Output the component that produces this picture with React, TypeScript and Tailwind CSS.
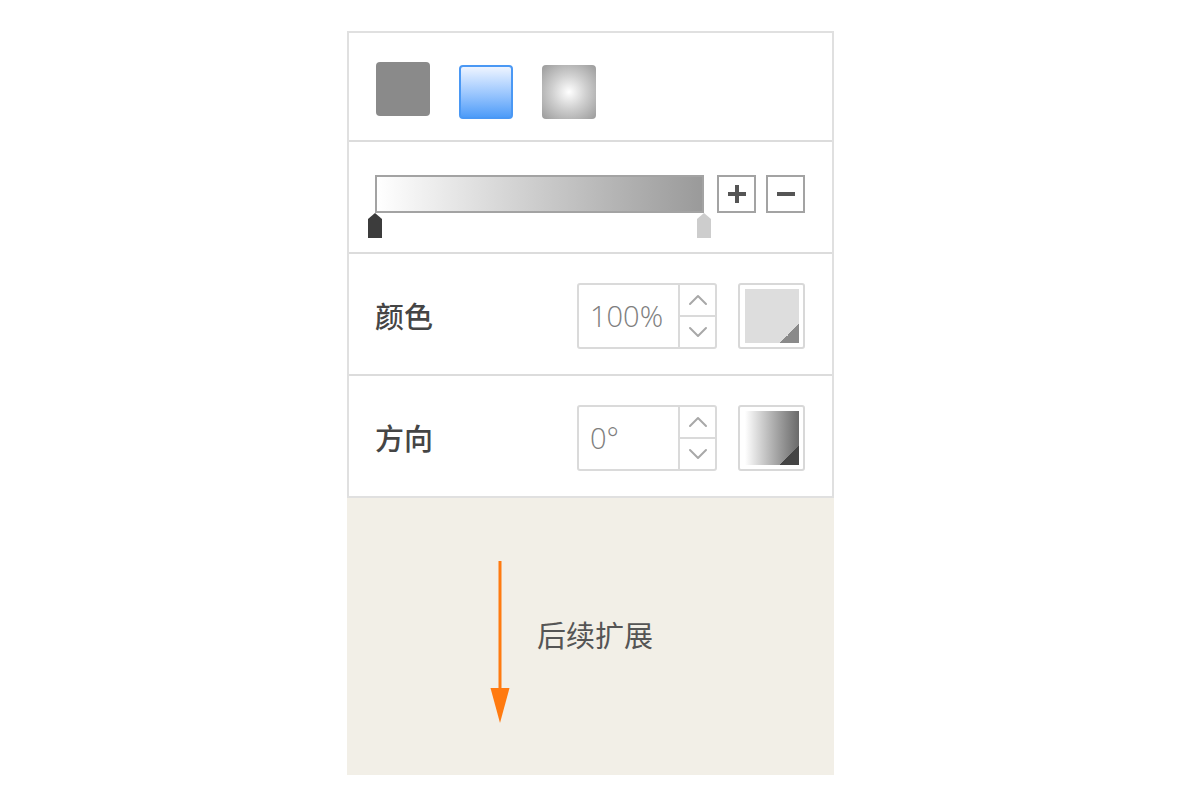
import { useState } from "react";

const cjk = { fontFamily: '"Noto Sans CJK SC", "Noto Sans", sans-serif' };
const num = { fontFamily: '"Open Sans", "Noto Sans", sans-serif' };

function Chevron({ up }: { up?: boolean }) {
  return (
    <svg width="20" height="12" viewBox="0 0 20 12" fill="none">
      <path
        d={up ? "M2 10 L10 2 L18 10" : "M2 2 L10 10 L18 2"}
        stroke="#a8a8a8"
        strokeWidth="2"
        strokeLinecap="round"
        strokeLinejoin="round"
      />
    </svg>
  );
}

function Stepper({ value }: { value: string }) {
  return (
    <div className="flex h-[66px] w-[140px] rounded-[3px] border-2 border-[#dadada] bg-white">
      <div
        className="flex flex-1 items-center pl-[11px] text-[29px] font-light text-[#7e7e7e]"
        style={num}
      >
        {value}
      </div>
      <div className="flex w-[37px] flex-col border-l-2 border-[#dadada]">
        <button type="button" className="flex flex-1 items-center justify-center">
          <Chevron up />
        </button>
        <button
          type="button"
          className="flex flex-1 items-center justify-center border-t-2 border-[#dadada]"
        >
          <Chevron />
        </button>
      </div>
    </div>
  );
}

function Handle({ color }: { color: string }) {
  return (
    <svg width="16" height="25" viewBox="0 0 16 25">
      <path d="M8 0 L15 6 L15 25 L1 25 L1 6 Z" fill={color} />
    </svg>
  );
}

export default function App() {
  const [fill, setFill] = useState(1);

  return (
    <div className="min-h-[809px] bg-white pt-[31px]">
      <div className="ml-[347px] w-[487px]">
        <div className="border-2 border-[#e0e0e0] bg-white">
          {/* fill type */}
          <div className="flex h-[109px] items-start gap-[29px] border-b-2 border-[#dcdcdc] pl-[27px] pt-[29px]">
            <button
              type="button"
              onClick={() => setFill(0)}
              className="h-[54px] w-[54px] rounded-[4px] bg-[#8a8a8a]"
            />
            <button
              type="button"
              onClick={() => setFill(1)}
              className={`mt-[3px] h-[54px] w-[54px] rounded-[4px] bg-gradient-to-b from-[#eef4ff] to-[#4d9cf8] ${
                fill === 1 ? "border-2 border-[#4a98f4]" : ""
              }`}
            />
            <button
              type="button"
              onClick={() => setFill(2)}
              className="mt-[3px] h-[54px] w-[54px] rounded-[4px] bg-[radial-gradient(circle,#ffffff_0%,#cfcfcf_45%,#9a9a9a_100%)]"
            />
          </div>

          {/* gradient stops */}
          <div className="flex h-[112px] items-start border-b-2 border-[#dcdcdc] pl-[18px] pt-[33px]">
            <div className="flex flex-col">
              <div className="ml-[8px] h-[38px] w-[329px] border-2 border-[#a3a3a3] bg-gradient-to-r from-white to-[#9a9a9a]" />
              <div className="flex w-[345px] justify-between">
                <Handle color="#3c3c3c" />
                <Handle color="#cdcdcd" />
              </div>
            </div>
            <div className="ml-[5px] flex gap-[10px]">
              <button
                type="button"
                className="flex h-[38px] w-[39px] items-center justify-center border-2 border-[#a3a3a3] bg-white"
              >
                <svg width="22" height="22" viewBox="0 0 22 22">
                  <path d="M11 2 V20 M2 11 H20" stroke="#555" strokeWidth="4" />
                </svg>
              </button>
              <button
                type="button"
                className="flex h-[38px] w-[39px] items-center justify-center border-2 border-[#a3a3a3] bg-white"
              >
                <svg width="22" height="22" viewBox="0 0 22 22">
                  <path d="M2 11 H20" stroke="#555" strokeWidth="4" />
                </svg>
              </button>
            </div>
          </div>

          {/* colour */}
          <div className="flex h-[122px] items-center justify-between border-b-2 border-[#dcdcdc] pl-[26px] pr-[27px] pt-[4px]">
            <span className="text-[29px] font-medium text-[#454545]" style={cjk}>
              颜色
            </span>
            <div className="flex items-center gap-[21px]">
              <Stepper value="100%" />
              <div className="flex h-[66px] w-[67px] items-center justify-center rounded-[3px] border-2 border-[#d8d8d8] bg-white">
                <div className="relative h-[54px] w-[54px] bg-[#dddddd]">
                  <div className="absolute bottom-0 right-0 h-[19px] w-[19px] bg-[linear-gradient(to_top_left,#8a8a8a_50%,transparent_50%)]" />
                </div>
              </div>
            </div>
          </div>

          {/* direction */}
          <div className="flex h-[120px] items-center justify-between pl-[26px] pr-[27px] pt-[4px]">
            <span className="text-[29px] font-medium text-[#454545]" style={cjk}>
              方向
            </span>
            <div className="flex items-center gap-[21px]">
              <Stepper value="0°" />
              <div className="flex h-[66px] w-[67px] items-center justify-center rounded-[3px] border-2 border-[#d8d8d8] bg-white">
                <div className="relative h-[54px] w-[54px] bg-gradient-to-r from-white to-[#6a6a6a]">
                  <div className="absolute bottom-0 right-0 h-[19px] w-[19px] bg-[linear-gradient(to_top_left,#444444_50%,transparent_50%)]" />
                </div>
              </div>
            </div>
          </div>
        </div>

        {/* future extension */}
        <div className="flex h-[277px] items-start bg-[#f2efe7] pl-[143px] pt-[63px]">
          <svg width="20" height="163" viewBox="0 0 20 163">
            <path d="M10 0 V135" stroke="#ff7a10" strokeWidth="3" />
            <path d="M0.5 127 H19.5 L10 162 Z" fill="#ff7a10" />
          </svg>
          <span
            className="ml-[27px] mt-[52px] text-[29px] text-[#555555]"
            style={cjk}
          >
            后续扩展
          </span>
        </div>
      </div>
    </div>
  );
}
